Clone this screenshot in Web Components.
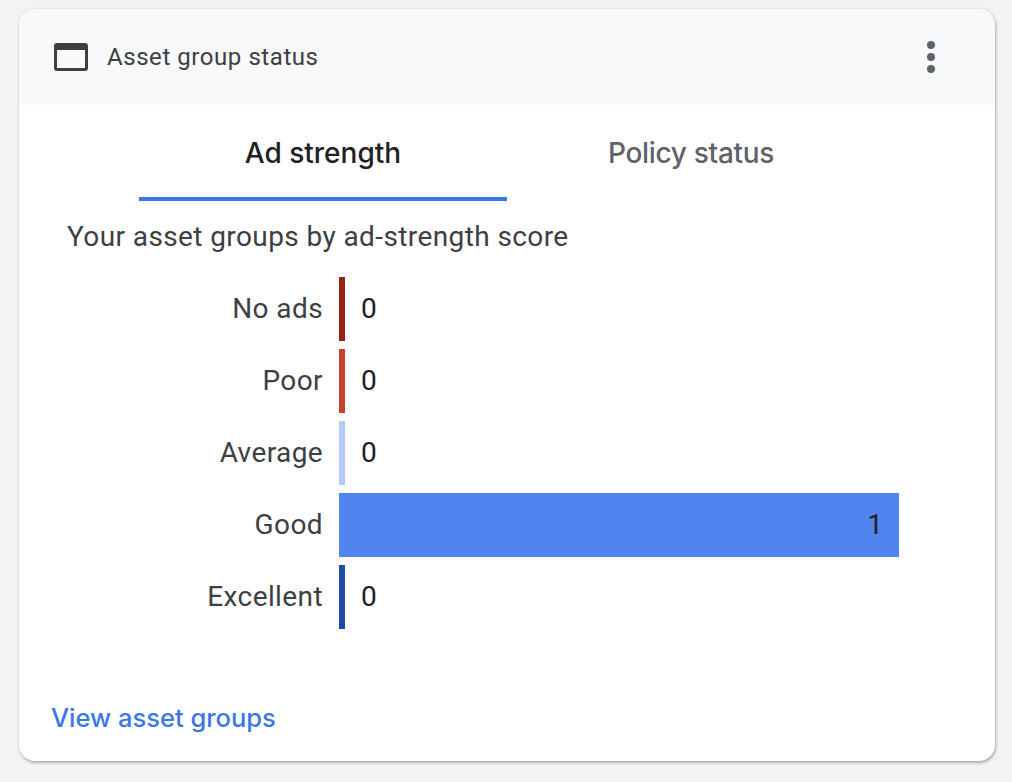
<!DOCTYPE html>
<html><head><meta charset="utf-8"><style>
html,body{margin:0;height:100%}
body{background:#f1f3f4;padding:9px 17px 21px 19px;box-sizing:border-box;height:782px;overflow:hidden;font-family:Roboto,sans-serif}
</style></head><body>
<status-card></status-card>
<script>
class BarRow extends HTMLElement{
  constructor(){super();const s=this.attachShadow({mode:'open'});
    const full=this.hasAttribute('full');
    s.innerHTML=`<style>
    :host{display:grid;grid-template-columns:184px 1fr;column-gap:16px;height:64px;align-items:center;font:28px/32px Roboto,sans-serif}
    .l{text-align:right;color:#3c4043;letter-spacing:.4px}
    .t{display:flex;height:64px;align-items:center}
    .b{height:64px;width:${full?'560px':'6px'};background:${this.getAttribute('color')};display:flex;align-items:center;justify-content:flex-end;box-sizing:border-box;padding-right:${full?'16px':'0'}}
    .v{color:#202124;margin-left:${full?'0':'16px'}}
    </style><div class="l"><slot></slot></div><div class="t"><div class="b">${full?`<span class="v">${this.getAttribute('value')}</span>`:''}</div>${full?'':`<span class="v">${this.getAttribute('value')}</span>`}</div>`;
  }
}
customElements.define('bar-row',BarRow);
class TabItem extends HTMLElement{
  constructor(){super();const s=this.attachShadow({mode:'open'});
    const a=this.hasAttribute('active');
    s.innerHTML=`<style>
    :host{display:flex;width:368px;height:96px;box-sizing:border-box;align-items:flex-start;justify-content:center;padding-top:32px;border-bottom:4px solid ${a?'#3b78e7':'transparent'};font:500 28px/32px Inter,Roboto,sans-serif;letter-spacing:${a?'0':'-.3px'};color:${a?'#202124':'#5f6368'}}
    </style><slot></slot>`;
  }
}
customElements.define('tab-item',TabItem);
class StatusCard extends HTMLElement{
  constructor(){super();const s=this.attachShadow({mode:'open'});
    s.innerHTML=`<style>
    :host{display:flex;flex-direction:column;height:752px;background:#fff;border-radius:16px;overflow:hidden;box-shadow:1px 2px 3px 0 rgba(60,64,67,.35),0 0 3px rgba(60,64,67,.15)}
    header{display:flex;align-items:center;height:96px;background:#f8f9fa;padding:0 58px 0 35px;flex:none}
    svg.ic{width:34px;height:28px;margin-right:19px;flex:none}
    h2{flex:1;margin:0;font:400 24px/32px Roboto,sans-serif;letter-spacing:.56px;color:#3c4043}
    svg.more{width:12px;height:32px;flex:none}
    nav{display:flex;padding-left:120px;flex:none}
    p{margin:20px 0 0 48px;font:28px/32px Roboto,sans-serif;letter-spacing:.4px;color:#3c4043;flex:none}
    .rows{display:flex;flex-direction:column;gap:8px;margin:24px 0 0 120px}
    a{margin:auto 0 27px 32px;font:500 25.5px/32px Inter,Roboto,sans-serif;color:#3b78e7;text-decoration:none}
    </style>
    <header>
      <svg class="ic" viewBox="0 0 34 28"><path fill="#3c4043" fill-rule="evenodd" d="M3 0h28a3 3 0 0 1 3 3v22a3 3 0 0 1-3 3H3a3 3 0 0 1-3-3V3a3 3 0 0 1 3-3zm0 7v18h28V7z"/></svg>
      <h2>Asset group status</h2>
      <svg class="more" viewBox="0 0 12 32"><circle cx="6" cy="4" r="4" fill="#5f6368"/><circle cx="6" cy="16" r="4" fill="#5f6368"/><circle cx="6" cy="28" r="4" fill="#5f6368"/></svg>
    </header>
    <nav><tab-item active>Ad strength</tab-item><tab-item>Policy status</tab-item></nav>
    <p>Your asset groups by ad-strength score</p>
    <div class="rows">
      <bar-row color="#9a2118" value="0">No ads</bar-row>
      <bar-row color="#c94031" value="0">Poor</bar-row>
      <bar-row color="#b3cbf7" value="0">Average</bar-row>
      <bar-row color="#5084ee" value="1" full>Good</bar-row>
      <bar-row color="#1f4aa5" value="0">Excellent</bar-row>
    </div>
    <a href="#">View asset groups</a>`;
  }
}
customElements.define('status-card',StatusCard);
</script>
</body></html>
